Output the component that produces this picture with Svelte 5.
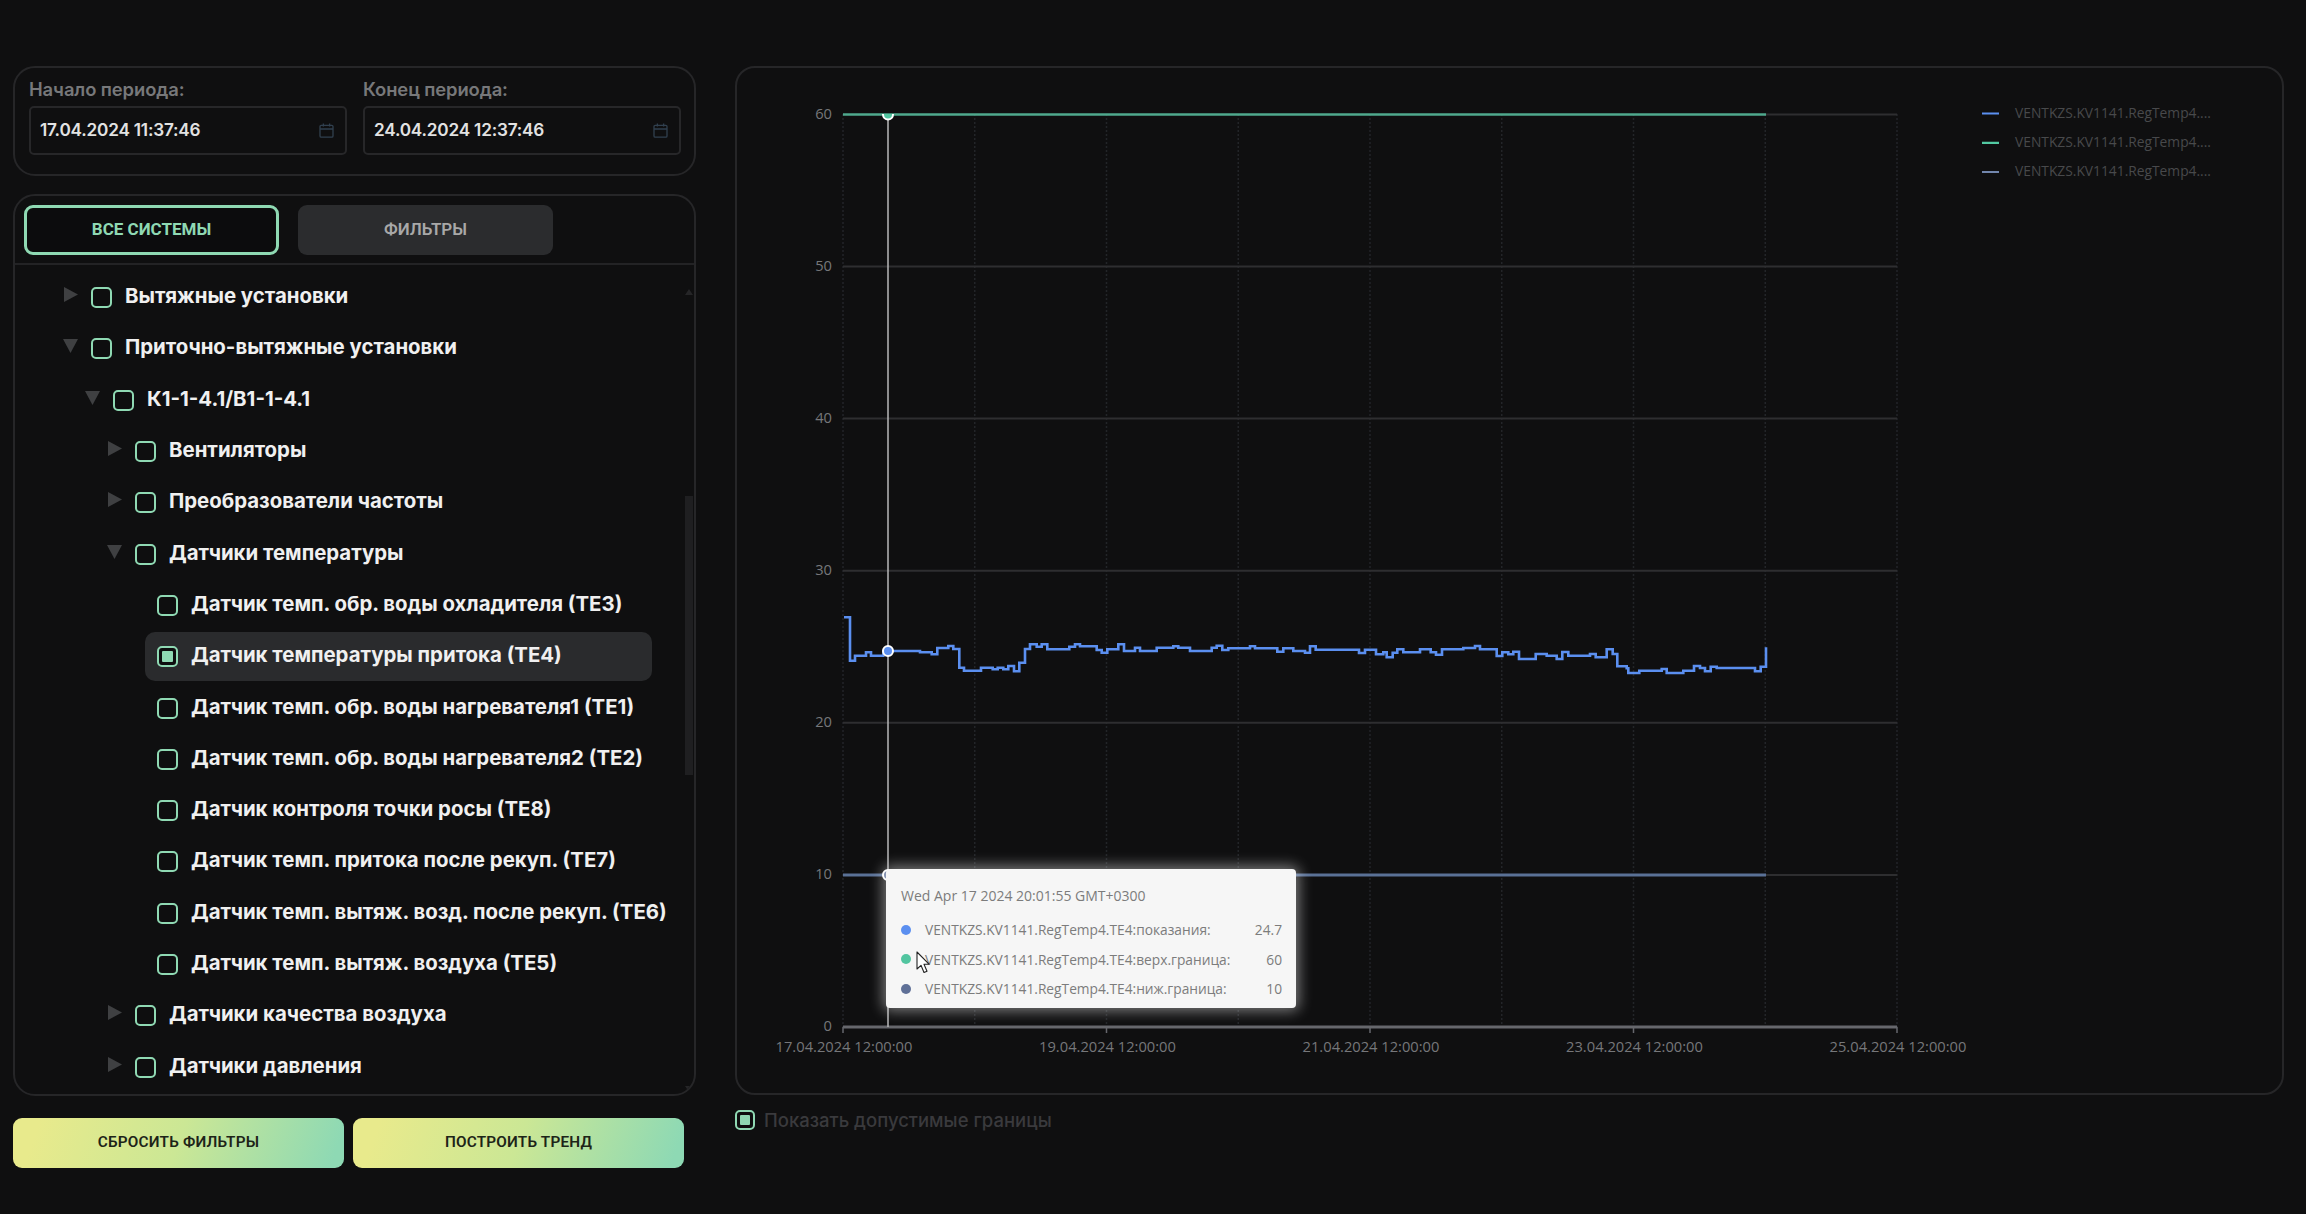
<script>
  const z1 = [[72,82],[90,82],[90,212],[105,212],[105,197],[138,197],[138,187],[153,187],[153,197],[190,197],[190,183],[300,183],[300,187],[335,187],[335,193],[352,193],[352,174],[385,174],[385,168],[400,168],[400,177],[418,177],[418,233],[432,233],[432,242],[483,242],[483,233],[518,233],[518,238],[533,238],[533,233],[550,233],[550,238],[565,238],[565,228],[582,228],[582,244],[598,244],[598,218],[615,218],[615,177],[630,177],[630,163],[650,163],[650,170],[665,170],[665,163],[682,163],[682,178],[748,178],[748,170],[765,170],[765,163],[780,163],[780,169],[830,169],[830,180],[845,180],[845,188],[862,188],[862,178],[895,178],[895,163],[912,163],[912,183],[945,183],[945,173],[960,173],[960,183],[1010,183],[1010,173],[1060,173],[1060,169],[1075,169],[1075,173],[1110,173],[1110,183],[1175,183],[1175,173],[1190,173],[1190,167],[1207,167],[1207,180],[1225,180],[1225,175],[1290,175],[1290,169],[1305,169],[1305,175],[1372,175],[1372,185],[1390,185],[1390,175],[1420,175],[1420,183],[1455,183],[1455,188],[1470,188],[1470,169],[1487,169],[1487,179],[1500,179]];
  const z2 = [[117,179],[117,189],[135,189],[135,179],[168,179],[168,193],[190,193],[190,187],[200,187],[200,202],[218,202],[218,188],[232,188],[232,178],[250,178],[250,187],[300,187],[300,178],[332,178],[332,187],[348,187],[348,194],[366,194],[366,178],[430,178],[430,174],[465,174],[465,168],[480,168],[480,178],[530,178],[530,198],[547,198],[547,187],[565,187],[565,193],[580,193],[580,185],[597,185],[597,207],[647,207],[647,192],[680,192],[680,197],[710,197],[710,207],[727,207],[727,186],[745,186],[745,197],[810,197],[810,192],[827,192],[827,202],[860,202],[860,178],[878,178],[878,192],[892,192],[892,229],[920,229],[920,235],[925,235],[925,249],[958,249],[958,242],[1025,242],[1025,237],[1040,237],[1040,249],[1090,249],[1090,242],[1122,242],[1122,228],[1140,228],[1140,234],[1155,234],[1155,244],[1172,244],[1172,230],[1190,230],[1190,234],[1305,234],[1305,244],[1322,244],[1322,230],[1338,230],[1338,172]];
  const trend = [
    ...z1.map(([x, y]) => [820 + x / 3, 590 + y / 3]),
    ...z2.map(([x, y]) => [1320 + x / 3, 590 + y / 3])
  ].map(([x, y]) => `${x.toFixed(1)},${y.toFixed(1)}`).join(' ');

  const X0 = 843, XSTEP = 131.75, Y0 = 1027, YSTEP = 152.1;
  const vgrid = Array.from({ length: 9 }, (_, i) => X0 + i * XSTEP);
  const ylabels = [10, 20, 30, 40, 50].map((v) => ({ v, y: Y0 - (v / 10) * YSTEP }));
  const xlabels = ['17.04.2024 12:00:00', '19.04.2024 12:00:00', '21.04.2024 12:00:00', '23.04.2024 12:00:00', '25.04.2024 12:00:00'];

  const tree = [
    { t: 'Вытяжные установки', l: 0, a: 'r' },
    { t: 'Приточно-вытяжные установки', l: 0, a: 'd' },
    { t: 'К1-1-4.1/В1-1-4.1', l: 1, a: 'd' },
    { t: 'Вентиляторы', l: 2, a: 'r' },
    { t: 'Преобразователи частоты', l: 2, a: 'r' },
    { t: 'Датчики температуры', l: 2, a: 'd' },
    { t: 'Датчик темп. обр. воды охладителя (ТЕ3)', l: 3 },
    { t: 'Датчик температуры притока (ТЕ4)', l: 3, sel: true },
    { t: 'Датчик темп. обр. воды нагревателя1 (ТЕ1)', l: 3 },
    { t: 'Датчик темп. обр. воды нагревателя2 (ТЕ2)', l: 3 },
    { t: 'Датчик контроля точки росы (ТЕ8)', l: 3 },
    { t: 'Датчик темп. притока после рекуп. (ТЕ7)', l: 3 },
    { t: 'Датчик темп. вытяж. возд. после рекуп. (ТЕ6)', l: 3 },
    { t: 'Датчик темп. вытяж. воздуха (ТЕ5)', l: 3 },
    { t: 'Датчики качества воздуха', l: 2, a: 'r' },
    { t: 'Датчики давления', l: 2, a: 'r' }
  ];

  const tips = [
    { c: '#5b8ff0', n: 'VENTKZS.KV1141.RegTemp4.TE4:показания:', v: '24.7' },
    { c: '#52c5a0', n: 'VENTKZS.KV1141.RegTemp4.TE4:верх.граница:', v: '60' },
    { c: '#5f7097', n: 'VENTKZS.KV1141.RegTemp4.TE4:ниж.граница:', v: '10' }
  ];
  const legend = [
    { c: '#5b8ff0', y: 113.5 },
    { c: '#52c9a2', y: 142.8 },
    { c: '#7286ad', y: 172 }
  ];
</script>

{#snippet dateField(label, value)}
  <div class="field">
    <div class="field-label">{label}</div>
    <div class="input">
      <span>{value}</span>
      <svg class="cal" viewBox="0 0 15 15" width="15" height="15" fill="none" stroke="#31404f" stroke-width="1.3">
        <rect x="1" y="2.4" width="13" height="11.8" rx="1.2" />
        <path d="M1 6h13M4.4 0.4v3M10.6 0.4v3" />
      </svg>
    </div>
  </div>
{/snippet}

<div class="page">
  <aside class="left">
    <section class="panel dates">
      {@render dateField('Начало периода:', '17.04.2024 11:37:46')}
      {@render dateField('Конец периода:', '24.04.2024 12:37:46')}
    </section>

    <section class="panel systems">
      <div class="tabs">
        <button class="tab active">ВСЕ СИСТЕМЫ</button>
        <button class="tab">ФИЛЬТРЫ</button>
      </div>
      <div class="tree">
        {#each tree as n}
          <div class="row l{n.l}" class:leaf={!n.a}>
            {#if n.a === 'r'}
              <svg class="arrow" viewBox="0 0 15 15" width="15" height="15"><polygon points="1,0 15,7.5 1,15" /></svg>
            {:else if n.a === 'd'}
              <svg class="arrow" viewBox="0 0 15 15" width="15" height="15"><polygon points="0,1 15,1 7.5,15" /></svg>
            {/if}
            <div class="pill" class:sel={n.sel}>
              <span class="box" class:on={n.sel}></span>
              <span class="name">{n.t}</span>
            </div>
          </div>
        {/each}
        <div class="thumb"></div>
        <svg class="sb-up" viewBox="0 0 8 6" width="8" height="6"><polygon points="4,0 8,6 0,6" /></svg>
        <svg class="sb-down" viewBox="0 0 8 6" width="8" height="6"><polygon points="0,0 8,0 4,6" /></svg>
      </div>
    </section>

    <div class="actions">
      <button class="cta">СБРОСИТЬ ФИЛЬТРЫ</button>
      <button class="cta">ПОСТРОИТЬ ТРЕНД</button>
    </div>
  </aside>

  <main class="right">
    <section class="panel chart">
      <svg class="plot" viewBox="735 66 1549 1029" width="1549" height="1029">
        {#each vgrid as x}
          <line x1={x} x2={x} y1="114" y2={Y0} class="vg" />
        {/each}
        {#each ylabels as l}
          <line x1={X0} x2="1897" y1={l.y} y2={l.y} class="hg" />
        {/each}
        <line x1="1766" x2="1897" y1="114.5" y2="114.5" class="hg" />

        <text class="ax" x="832" y="118.5" text-anchor="end">60</text>
        {#each ylabels as l}
          <text class="ax" x="832" y={l.y + 4} text-anchor="end">{l.v}</text>
        {/each}
        <text class="ax" x="832" y="1031" text-anchor="end">0</text>
        {#each xlabels as t, i}
          <text class="ax" x={X0 + 1 + i * 2 * XSTEP} y="1052" text-anchor="middle">{t}</text>
          <line x1={X0 + i * 2 * XSTEP} x2={X0 + i * 2 * XSTEP} y1={Y0} y2={Y0 + 6} class="tick" />
        {/each}
        <line x1={X0} x2="1897" y1={Y0} y2={Y0} class="axis" />

        <line x1={X0} x2="1766" y1="114.5" y2="114.5" stroke="#4fa98d" stroke-width="2.5" />
        <line x1={X0} x2="1766" y1="875" y2="875" stroke="#5a7196" stroke-width="3" />
        <polyline points={trend} fill="none" stroke="#5b8ff0" stroke-width="2.6" />

        <line x1="888" x2="888" y1="114" y2={Y0} stroke="#b9b9b9" stroke-width="1.5" />
        <clipPath id="top"><rect x="870" y="114" width="40" height="20" /></clipPath>
        <circle cx="888" cy="114.5" r="5" fill="#52c5a0" stroke="#fff" stroke-width="2" clip-path="url(#top)" />
        <circle cx="888" cy="651" r="5" fill="#5b8ff0" stroke="#fff" stroke-width="2" />
        <circle cx="888" cy="875" r="5" fill="#5f7097" stroke="#fff" stroke-width="2" />

        {#each legend as l}
          <line x1="1982" x2="1999" y1={l.y} y2={l.y} stroke={l.c} stroke-width="2.2" />
          <text class="lg" x="2015" y={l.y + 4}>VENTKZS.KV1141.RegTemp4....</text>
        {/each}
      </svg>

      <div class="tooltip">
        <div class="tip-date">Wed Apr 17 2024 20:01:55 GMT+0300</div>
        {#each tips as t}
          <div class="tip-row">
            <i class="dot" style:background={t.c}></i>
            <span class="tip-name">{t.n}</span>
            <span class="tip-val">{t.v}</span>
          </div>
        {/each}
      </div>

      <svg class="pointer" viewBox="0 0 14 23" width="14" height="23">
        <path d="M1 1 V18 L5 14.3 L8 21.5 L11 20.2 L8 13.3 L13 13.1 Z" fill="#fff" stroke="#222" stroke-width="1.1" stroke-linejoin="round" />
      </svg>
    </section>

    <label class="bounds">
      <span class="box on small"></span>
      <span>Показать допустимые границы</span>
    </label>
  </main>
</div>

<style>
  :global(body) {
    margin: 0;
    background: #0f0f10;
  }
  .page {
    width: 2306px;
    height: 1214px;
    box-sizing: border-box;
    padding: 66px 22px 0 13px;
    display: flex;
    gap: 39px;
    background: #0f0f10;
    font-family: Inter, "Noto Sans", sans-serif;
    overflow: hidden;
  }
  .left {
    width: 683px;
    flex: none;
    display: flex;
    flex-direction: column;
  }
  .panel {
    box-sizing: border-box;
    border: 2px solid #262628;
    border-radius: 22px;
  }
  .dates {
    height: 110px;
    padding: 9px 13px 0 14px;
    display: flex;
    gap: 16px;
  }
  .field {
    flex: 1;
  }
  .field-label {
    height: 29px;
    font-size: 18.4px;
    line-height: 24px;
    font-weight: 600;
    color: #77787a;
    letter-spacing: -0.1px;
  }
  .input {
    box-sizing: border-box;
    height: 49px;
    border: 2px solid #272729;
    border-radius: 5px;
    padding: 0 11px 3px 9px;
    display: flex;
    align-items: center;
    justify-content: space-between;
    font-size: 17.2px;
    font-weight: 600;
    color: #e2e2e2;
    letter-spacing: -0.2px;
  }
  .cal {
    margin-top: 3px;
  }
  .systems {
    height: 902px;
    margin-top: 18px;
    display: flex;
    flex-direction: column;
    overflow: hidden;
  }
  .tabs {
    height: 69px;
    flex: none;
    box-sizing: border-box;
    padding: 9px 0 0 9px;
    display: flex;
    gap: 19px;
    border-bottom: 2px solid #232325;
  }
  .tab {
    width: 255px;
    height: 50px;
    box-sizing: border-box;
    border: none;
    border-radius: 9px;
    background: #2b2c2e;
    color: #a8a8a8;
    font: 600 17px/1 Roboto, sans-serif;
    padding: 0 0 2px;
  }
  .tab.active {
    background: #0c0c0d;
    border: 3px solid #8fd9b3;
    color: #8fd9b3;
    font-weight: 700;
  }
  .tree {
    position: relative;
    flex: 1;
    padding-top: 7px;
    overflow: hidden;
  }
  .row {
    height: 51.3px;
    display: flex;
    align-items: center;
    box-sizing: border-box;
  }
  .row.l0 { padding-left: 48px; }
  .row.l1 { padding-left: 70px; }
  .row.l2 { padding-left: 92px; }
  .row.leaf { padding-left: 130px; }
  .arrow {
    flex: none;
    margin-right: -1px;
    margin-top: -6px;
    fill: #3f4042;
  }
  .pill {
    display: flex;
    align-items: center;
    padding-left: 14px;
  }
  .leaf .pill {
    width: 507px;
    height: 49px;
    box-sizing: border-box;
    padding-left: 12px;
    border-radius: 10px;
  }
  .pill.sel {
    background: #2a2b2d;
  }
  .box {
    flex: none;
    width: 21px;
    height: 21px;
    box-sizing: border-box;
    border: 2.5px solid #8fd9b3;
    border-radius: 5px;
    margin-right: 13px;
    position: relative;
    background: #0e0e0f;
  }
  .box.on::after {
    content: "";
    position: absolute;
    inset: 3px;
    background: #8fd9b3;
    border-radius: 1px;
  }
  .box.small {
    width: 20px;
    height: 20px;
    margin-right: 9px;
  }
  .name {
    font-size: 20.4px;
    font-weight: 700;
    color: #f0f0f0;
    white-space: nowrap;
    margin-top: -4px;
  }
  .thumb {
    position: absolute;
    right: 1px;
    top: 231px;
    width: 8px;
    height: 279px;
    background: #1f1f21;
  }
  .sb-up, .sb-down {
    position: absolute;
    right: 1px;
    fill: #252527;
  }
  .sb-up { top: 24px; }
  .sb-down { bottom: 2px; }
  .actions {
    margin-top: 22px;
    display: flex;
    gap: 9px;
  }
  .cta {
    width: 331px;
    height: 50px;
    border: none;
    border-radius: 9px;
    padding: 0;
    background: linear-gradient(110deg, #e8ea8c 8%, #cbe795 50%, #8ed9b4 96%);
    color: #1d2418;
    font: 600 15.3px/1 Roboto, sans-serif;
    letter-spacing: 0.2px;
  }
  .right {
    flex: 1;
    display: flex;
    flex-direction: column;
  }
  .chart {
    position: relative;
    height: 1029px;
    flex: none;
    overflow: hidden;
    border-radius: 20px;
  }
  .plot {
    position: absolute;
    left: -2px;
    top: -2px;
    display: block;
  }
  .vg {
    stroke: #232528;
    stroke-width: 1.5;
    stroke-dasharray: 2 2;
  }
  .hg {
    stroke: #2e2e30;
    stroke-width: 2;
  }
  .axis {
    stroke: #66676c;
    stroke-width: 3;
  }
  .tick {
    stroke: #66676c;
    stroke-width: 1.5;
  }
  .ax {
    font: 14.7px "Open Sans", sans-serif;
    fill: #76777a;
  }
  .lg {
    font: 13.8px "Open Sans", sans-serif;
    fill: #48494b;
  }
  .tooltip {
    position: absolute;
    left: 149px;
    top: 801px;
    width: 410px;
    height: 139px;
    box-sizing: border-box;
    padding: 17px 14px 0 15px;
    background: #f6f6f6;
    border-radius: 4px;
    box-shadow: 0 0 14px 3px rgba(255, 255, 255, 0.45);
    font-family: "Open Sans", sans-serif;
    color: #7c7c7c;
  }
  .tip-date {
    font-size: 14px;
    line-height: 20px;
    margin-bottom: 9px;
  }
  .tip-row {
    height: 29.5px;
    display: flex;
    align-items: center;
    font-size: 13.75px;
  }
  .dot {
    width: 10px;
    height: 10px;
    border-radius: 50%;
    margin-right: 14px;
    flex: none;
  }
  .tip-name {
    flex: 1;
    white-space: nowrap;
  }
  .pointer {
    position: absolute;
    left: 179px;
    top: 883px;
  }
  .bounds {
    display: flex;
    align-items: center;
    margin-top: 14px;
    font-size: 18.5px;
    font-weight: 500;
    color: #3a3a3d;
  }
</style>
